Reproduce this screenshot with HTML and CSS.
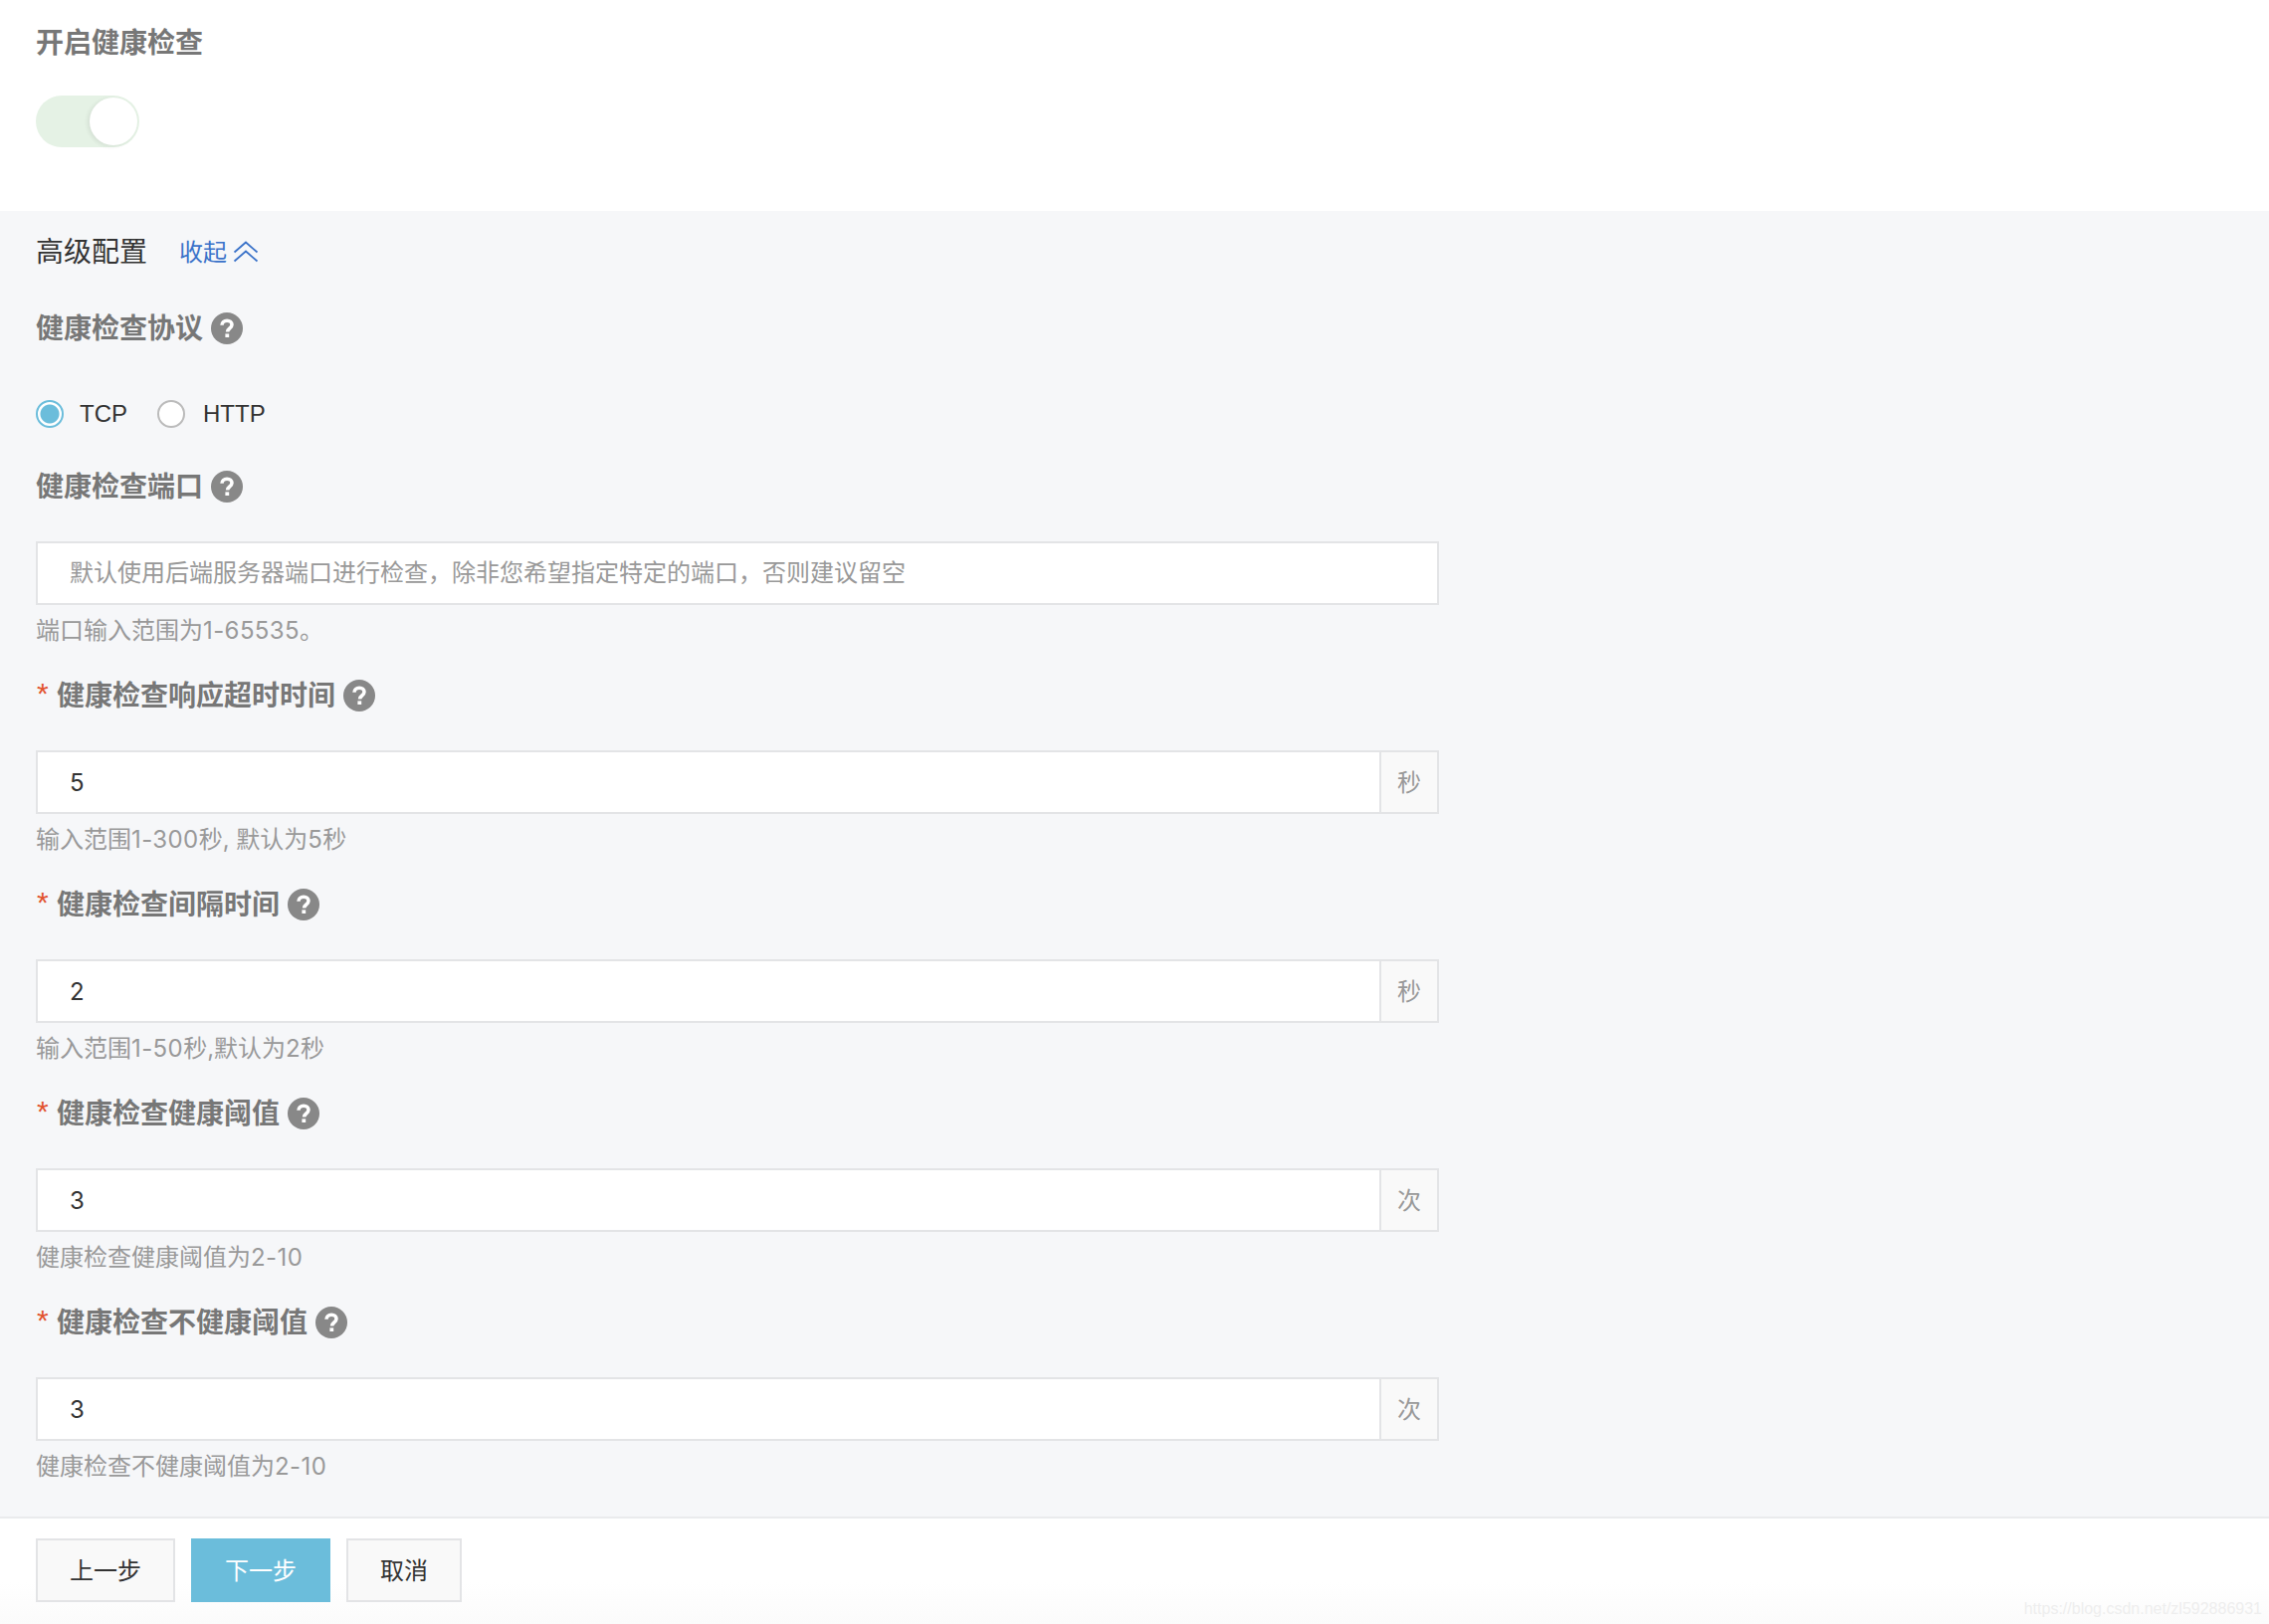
FILE: index.html
```html
<!DOCTYPE html>
<html lang="zh-CN">
<head>
<meta charset="utf-8">
<title>健康检查</title>
<link rel="stylesheet" href="styles.css">
</head>
<body>
<div class="page">
  <section class="top">
    <div class="label">开启健康检查</div>
    <div class="switch"><span class="knob"></span></div>
  </section>
  <section class="advanced">
    <div class="adv-head">
      <span class="adv-title">高级配置</span>
      <a class="collapse">收起
        <svg class="chev" width="26" height="22" viewBox="0 0 26 22"><path d="M1.5 11.5 13 1.5l11.5 10M1.5 20.5 13 10.500l11.500 10" fill="none" stroke="#3a72c9" stroke-width="1.800"/></svg>
      </a>
    </div>
    <div class="label proto">健康检查协议<svg class="help" width="32" height="32" viewBox="0 0 32 32"><use href="#q"/></svg></div>
    <div class="radios">
      <span class="radio on"></span><span class="radio-text">TCP</span>
      <span class="radio"></span><span class="radio-text http">HTTP</span>
    </div>
    <div class="label port">健康检查端口<svg class="help" width="32" height="32" viewBox="0 0 32 32"><use href="#q"/></svg></div>
    <div class="field"><div class="box"><span class="ph">默认使用后端服务器端口进行检查，除非您希望指定特定的端口，否则建议留空</span></div></div>
    <div class="hint">端口输入范围为<span class="num">1-65535</span>。</div>

    <div class="label req">健康检查响应超时时间<svg class="help" width="32" height="32" viewBox="0 0 32 32"><use href="#q"/></svg></div>
    <div class="field"><div class="box"><span class="val">5</span></div><div class="addon">秒</div></div>
    <div class="hint">输入范围<span class="num">1-300</span>秒, 默认为<span class="num">5</span>秒</div>

    <div class="label req">健康检查间隔时间<svg class="help" width="32" height="32" viewBox="0 0 32 32"><use href="#q"/></svg></div>
    <div class="field"><div class="box"><span class="val">2</span></div><div class="addon">秒</div></div>
    <div class="hint">输入范围<span class="num">1-50</span>秒,默认为<span class="num">2</span>秒</div>

    <div class="label req">健康检查健康阈值<svg class="help" width="32" height="32" viewBox="0 0 32 32"><use href="#q"/></svg></div>
    <div class="field"><div class="box"><span class="val">3</span></div><div class="addon">次</div></div>
    <div class="hint">健康检查健康阈值为<span class="num">2-10</span></div>

    <div class="label req">健康检查不健康阈值<svg class="help" width="32" height="32" viewBox="0 0 32 32"><use href="#q"/></svg></div>
    <div class="field"><div class="box"><span class="val">3</span></div><div class="addon">次</div></div>
    <div class="hint">健康检查不健康阈值为<span class="num">2-10</span></div>
  </section>
  <footer class="foot">
    <button class="btn">上一步</button>
    <button class="btn primary">下一步</button>
    <button class="btn cancel">取消</button>
  </footer>
  <div class="watermark">https://blog.csdn.net/zl592886931</div>
</div>
<svg class="defs" width="0" height="0">
  <symbol id="q" viewBox="0 0 32 32">
    <circle cx="16" cy="16" r="16" fill="#888"/>
    <path d="M11 12.800c0-2.700 2.100-4.500 5.100-4.500 2.900 0 4.900 1.600 4.900 4 0 1.900-1 2.800-2.500 3.900-1.300 1-1.900 1.600-1.900 3.300" fill="none" stroke="#fff" stroke-width="3.600"/>
    <rect x="14.400" y="21.400" width="3.800" height="3.600" fill="#fff"/>
  </symbol>
</svg>
</body>
</html>
```
FILE: styles.css
```css
* { box-sizing: border-box; }
html, body { margin: 0; padding: 0; background: #fff; }
body { font-family: "Inter", "Noto Sans CJK SC", sans-serif; color: #333; }
.page { position: relative; width: 2280px; height: 1632px; overflow: hidden; display: flex; flex-direction: column; }
.defs { position: absolute; }

.top { height: 212px; padding: 22px 36px 0; background: #fff; }
.label { display: flex; align-items: center; height: 40px; padding-bottom: 2px; font-size: 28px; line-height: 38px; font-weight: 700; color: #777; font-family: "Noto Sans CJK SC", sans-serif; }
.help { margin-left: 8px; margin-top: 4px; flex: none; }
.req::before { content: "*"; color: #e2532f; width: 20px; padding-left: 1px; flex: none; font-size: 30px; font-weight: 400; line-height: 30px; font-family: "Liberation Sans", sans-serif; }

.switch { position: relative; width: 104px; height: 52px; margin-top: 34px; border-radius: 26px; background: #e5f2e5; }
.knob { position: absolute; top: 2px; right: 2px; width: 48px; height: 48px; border-radius: 50%; background: #fff; box-shadow: -2px 1px 4px rgba(0,0,0,.08); }

.advanced { height: 1314px; padding: 19px 36px 0; background: #f6f7f9; border-bottom: 2px solid #eaebed; }
.adv-head { display: flex; align-items: center; height: 40px; }
.adv-title { font-size: 28px; color: #333; font-family: "Noto Sans CJK SC", sans-serif; }
.collapse { display: flex; align-items: center; margin-left: 32px; font-size: 24px; color: #3a72c9; font-family: "Noto Sans CJK SC", sans-serif; }
.chev { margin-left: 6px; margin-top: 3px; }

.proto { margin-top: 38px; }
.radios { display: flex; align-items: center; height: 28px; margin-top: 53px; font-size: 24px; color: #333; }
.radio { width: 28px; height: 28px; border-radius: 50%; border: 2px solid #bbb; background: #fff; flex: none; }
.radio.on { border-color: #6bbddb; background: radial-gradient(circle, #6bbddb 0 9px, #fff 10px); }
.radio-text { margin-left: 16px; margin-right: 30px; font-family: "Liberation Sans", sans-serif; }
.radio-text.http { margin-left: 18px; }
.port { margin-top: 38px; }

.field { display: flex; width: 1410px; height: 64px; margin-top: 36px; }
.box { flex: 1; display: flex; align-items: center; padding-left: 32px; background: #fff; border: 2px solid #e3e4e6; font-size: 24px; }
.ph { color: #999; font-family: "Noto Sans CJK SC", sans-serif; padding-bottom: 5px; }
.val { color: #333; font-family: "Inter", sans-serif; }
.addon { width: 60px; flex: none; display: flex; align-items: center; justify-content: center; margin-left: -2px; padding-bottom: 3px; background: #f9f9f9; border: 2px solid #e3e4e6; color: #999; font-size: 24px; font-family: "Noto Sans CJK SC", sans-serif; }
.hint { height: 36px; margin-top: 8px; margin-bottom: 26px; font-size: 24px; line-height: 36px; color: #999; font-family: "Inter", "Noto Sans CJK SC", sans-serif; }
.num { letter-spacing: .4px; }

.foot { flex: 1; display: flex; gap: 16px; padding: 20px 36px 0; background: linear-gradient(180deg, #fff 60%, #fbfbfb 100%); }
.btn { width: 140px; height: 64px; border: 2px solid #e3e4e6; background: #f9f9f9; font-size: 24px; color: #333; font-family: "Noto Sans CJK SC", sans-serif; padding: 0 0 3px; }
.btn.primary { background: #6bbddb; border-color: #6bbddb; color: #fff; }
.btn.cancel { width: 116px; }

.watermark { position: absolute; right: 7px; bottom: 6px; font-size: 16px; font-family: "Liberation Sans", sans-serif; color: #eeeeee; }
```
